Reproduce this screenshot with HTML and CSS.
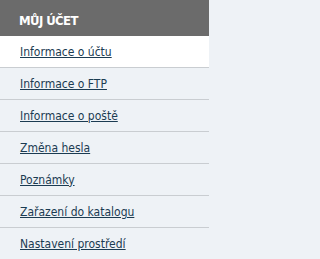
FILE: index.html
```html
<!DOCTYPE html>
<html lang="cs">
<head>
<meta charset="utf-8">
<link rel="stylesheet" href="styles.css">
</head>
<body>
<div class="box">
  <div class="head">MŮJ ÚČET</div>
  <ul class="menu">
    <li class="item active"><a href="#">Informace o účtu</a></li>
    <li class="item"><a href="#">Informace o FTP</a></li>
    <li class="item"><a href="#">Informace o poště</a></li>
    <li class="item"><a href="#">Změna hesla</a></li>
    <li class="item"><a href="#">Poznámky</a></li>
    <li class="item"><a href="#">Zařazení do katalogu</a></li>
    <li class="item"><a href="#">Nastavení prostředí</a></li>
  </ul>
</div>
</body>
</html>
```
FILE: styles.css
```css
html, body {
  margin: 0;
  padding: 0;
  background: #eef2f6;
}
.box {
  width: 209px;
}
.head {
  height: 36px;
  box-sizing: border-box;
  background: #6b6b6b;
  color: #ffffff;
  font-family: "Liberation Sans Narrow", "DejaVu Sans Condensed", sans-serif;
  font-stretch: condensed;
  font-weight: bold;
  font-size: 13px;
  line-height: 30px;
  padding-top: 6px;
  padding-left: 19px;
  letter-spacing: -0.6px;
}
.menu {
  list-style: none;
  margin: 0;
  padding: 0;
}
.item {
  height: 31px;
  border-bottom: 1px solid #c9cdd1;
  background: #eef2f6;
  display: flex;
  align-items: center;
  padding-left: 20px;
  font-family: "DejaVu Sans Condensed", "DejaVu Sans", sans-serif;
  font-stretch: condensed;
  font-size: 12px;
}
.item:last-child {
  border-bottom: none;
}
.item.active {
  background: #ffffff;
}
.item a {
  color: #1b3b52;
  text-decoration: underline;
}
```
